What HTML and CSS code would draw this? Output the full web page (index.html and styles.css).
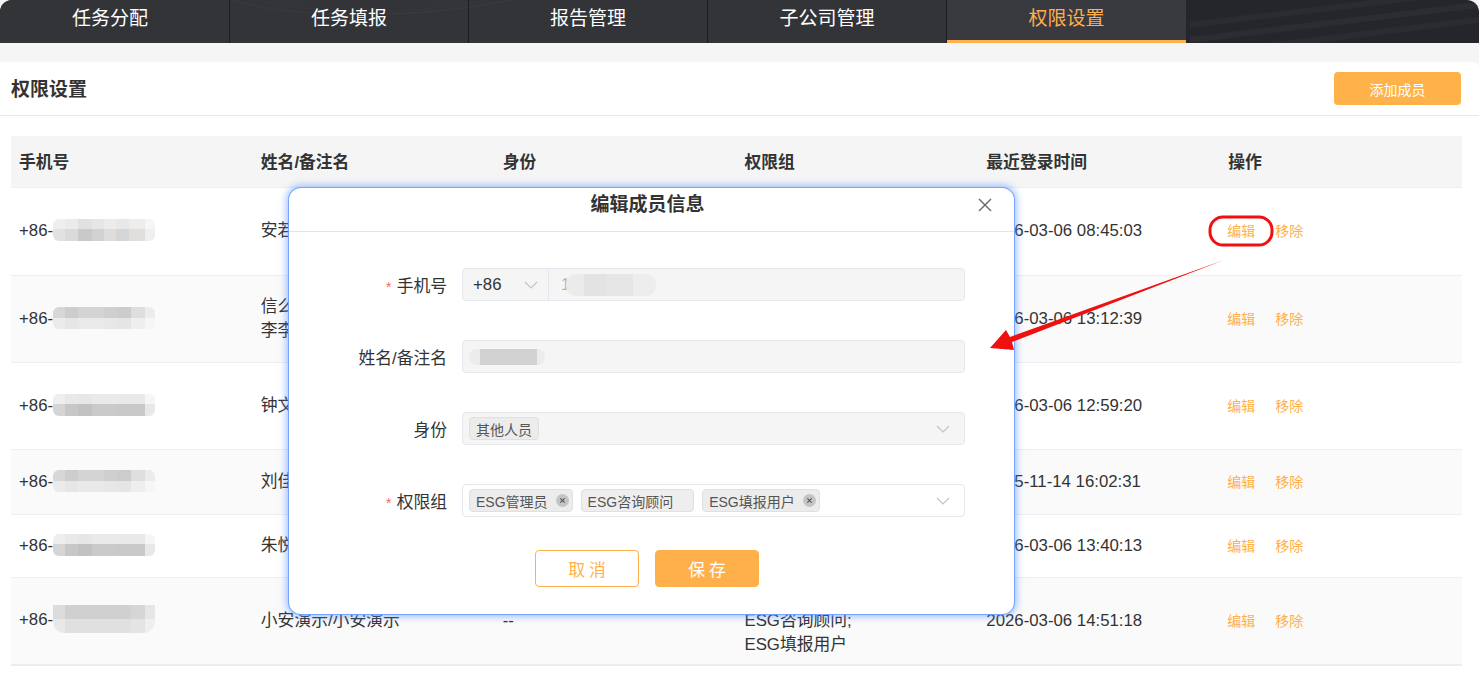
FILE: index.html
```html
<!DOCTYPE html>
<html lang="zh-CN">
<head>
<meta charset="utf-8">
<title>权限设置</title>
<link rel="stylesheet" href="styles.css">
</head>
<body>
<header class="topnav">
  <svg class="nav-deco" width="1479" height="43" viewBox="0 0 1479 43" aria-hidden="true">
    <path d="M225 -2 C 300 22, 430 18, 520 -2" fill="none" stroke="rgba(205,160,120,0.55)" stroke-width="1.2"/>
    <path d="M240 -4 C 320 18, 420 16, 505 -4" fill="none" stroke="rgba(205,160,120,0.3)" stroke-width="1"/>
    <path d="M1190 40 L1479 5" stroke="rgba(255,255,255,0.035)" stroke-width="6"/>
    <path d="M1190 25 L1479 -10" stroke="rgba(255,255,255,0.03)" stroke-width="6"/>
    <path d="M1250 48 L1479 20" stroke="rgba(255,255,255,0.03)" stroke-width="6"/>
  </svg>
  <nav class="tabs">
    <a class="tab">任务分配</a>
    <a class="tab">任务填报</a>
    <a class="tab">报告管理</a>
    <a class="tab">子公司管理</a>
    <a class="tab active">权限设置</a>
  </nav>
</header>

<main class="panel">
  <div class="panel-head">
    <h1 class="panel-title">权限设置</h1>
    <button class="btn-add">添加成员</button>
  </div>

  <table class="members">
    <thead>
      <tr>
        <th>手机号</th>
        <th>姓名/备注名</th>
        <th>身份</th>
        <th>权限组</th>
        <th>最近登录时间</th>
        <th>操作</th>
      </tr>
    </thead>
    <tbody>
      <tr class="tall">
        <td>+86-<span class="mask m1"></span></td>
        <td>安若溪/安若溪</td>
        <td>其他人员</td>
        <td>ESG管理员;<br>ESG咨询顾问;<br>ESG填报用户</td>
        <td>2026-03-06 08:45:03</td>
        <td><a class="act">编辑</a><a class="act">移除</a></td>
      </tr>
      <tr>
        <td>+86-<span class="mask m2"></span></td>
        <td>信么么么/<br>李李李</td>
        <td>其他人员</td>
        <td>ESG管理员;<br>ESG咨询顾问;<br>ESG填报用户</td>
        <td>2026-03-06 13:12:39</td>
        <td><a class="act">编辑</a><a class="act">移除</a></td>
      </tr>
      <tr>
        <td>+86-<span class="mask m3"></span></td>
        <td>钟文/钟文</td>
        <td>其他人员</td>
        <td>ESG管理员;<br>ESG咨询顾问;<br>ESG填报用户</td>
        <td>2026-03-06 12:59:20</td>
        <td><a class="act">编辑</a><a class="act">移除</a></td>
      </tr>
      <tr class="two-a">
        <td>+86-<span class="mask m2"></span></td>
        <td>刘佳/刘佳</td>
        <td>其他人员</td>
        <td>ESG填报用户</td>
        <td>2025-11-14 16:02:31</td>
        <td><a class="act">编辑</a><a class="act">移除</a></td>
      </tr>
      <tr class="two-b">
        <td>+86-<span class="mask m3"></span></td>
        <td>朱悦/朱悦</td>
        <td>其他人员</td>
        <td>ESG填报用户</td>
        <td>2026-03-06 13:40:13</td>
        <td><a class="act">编辑</a><a class="act">移除</a></td>
      </tr>
      <tr>
        <td>+86-<span class="mask m4"></span></td>
        <td>小安演示/小安演示</td>
        <td>--</td>
        <td>ESG管理员;<br>ESG咨询顾问;<br>ESG填报用户</td>
        <td>2026-03-06 14:51:18</td>
        <td><a class="act">编辑</a><a class="act">移除</a></td>
      </tr>
    </tbody>
  </table>
</main>

<div class="modal" role="dialog">
  <div class="modal-head">
    <h2 class="modal-title">编辑成员信息</h2>
    <svg class="modal-close" width="14" height="14" viewBox="0 0 14 14" aria-hidden="true">
      <path d="M1 1 L13 13 M13 1 L1 13" stroke="#666" stroke-width="1.4"/>
    </svg>
  </div>
  <div class="modal-body">
    <div class="form-row">
      <label class="form-label"><span class="req">*</span>手机号</label>
      <div class="field phone disabled">
        <div class="prefix">+86
          <svg class="chev" width="14" height="8" viewBox="0 0 14 8"><polyline points="1,1 7,7 13,1" fill="none" stroke="#c0c4cc" stroke-width="1.2"/></svg>
        </div>
        <div class="phone-num">1<span class="fmask pm"></span></div>
      </div>
    </div>
    <div class="form-row">
      <label class="form-label">姓名/备注名</label>
      <div class="field disabled"><span class="fmask nm"></span></div>
    </div>
    <div class="form-row">
      <label class="form-label">身份</label>
      <div class="field select disabled">
        <span class="tag">其他人员</span>
        <svg class="chev end" width="14" height="8" viewBox="0 0 14 8"><polyline points="1,1 7,7 13,1" fill="none" stroke="#c0c4cc" stroke-width="1.2"/></svg>
      </div>
    </div>
    <div class="form-row">
      <label class="form-label"><span class="req">*</span>权限组</label>
      <div class="field select">
        <span class="tag closable">ESG管理员<svg class="tag-x" width="13" height="13" viewBox="0 0 13 13" aria-hidden="true"><circle cx="6.5" cy="6.5" r="6.5" fill="#c4c4c4"/><path d="M4.3 4.3 L8.7 8.7 M8.7 4.3 L4.3 8.7" stroke="#555" stroke-width="1.1"/></svg></span>
        <span class="tag plain">ESG咨询顾问</span>
        <span class="tag closable">ESG填报用户<svg class="tag-x" width="13" height="13" viewBox="0 0 13 13" aria-hidden="true"><circle cx="6.5" cy="6.5" r="6.5" fill="#c4c4c4"/><path d="M4.3 4.3 L8.7 8.7 M8.7 4.3 L4.3 8.7" stroke="#555" stroke-width="1.1"/></svg></span>
        <svg class="chev end" width="14" height="8" viewBox="0 0 14 8"><polyline points="1,1 7,7 13,1" fill="none" stroke="#c0c4cc" stroke-width="1.2"/></svg>
      </div>
    </div>
    <div class="form-actions">
      <button class="btn btn-ghost">取消</button>
      <button class="btn btn-primary">保存</button>
    </div>
  </div>
</div>

<svg class="annot" width="1479" height="682" viewBox="0 0 1479 682" aria-hidden="true">
  <rect x="1210" y="217" width="62" height="28" rx="13" fill="none" stroke="#f01010" stroke-width="3"/>
  <polygon points="1224,260 1010,337 1006,330 990,348 1014,350 1012,342" fill="#f01010"/>
</svg>
</body>
</html>
```
FILE: styles.css
```css
* { box-sizing: border-box; }

html, body {
  margin: 0;
  padding: 0;
}

body {
  width: 1479px;
  height: 682px;
  overflow: hidden;
  background: #f5f5f5;
  font-family: "Liberation Sans", "Noto Sans CJK SC", sans-serif;
  color: #333;
  position: relative;
}

/* ---------- top navigation ---------- */
.topnav {
  position: relative;
  height: 43px;
  background: #25262b;
  border-radius: 12px 12px 0 0;
  overflow: hidden;
}

.nav-deco {
  position: absolute;
  left: 0;
  top: 0;
  pointer-events: none;
}

.tabs {
  position: relative;
  display: flex;
  margin-left: -9px;
  height: 43px;
}

.tab {
  width: 239px;
  height: 43px;
  display: flex;
  align-items: center;
  justify-content: center;
  padding-bottom: 10px;
  color: #ffffff;
  font-size: 19px;
  background: rgba(52, 53, 58, 0.92);
  border-right: 1px solid #1d1e21;
  cursor: pointer;
}

.tab.active {
  color: #ffb04a;
  background: rgba(58, 59, 64, 0.95);
  border-bottom: 3px solid #ffb04a;
  padding-bottom: 7px;
  border-right: none;
}

/* ---------- panel ---------- */
.panel {
  margin-top: 19px;
  background: #ffffff;
  border-radius: 0 6px 0 0;
  height: 620px;
}

.panel-head {
  height: 54px;
  display: flex;
  align-items: center;
  justify-content: space-between;
  padding: 0 18px 0 11px;
  border-bottom: 1px solid #e8e8e8;
}

.panel-title {
  margin: 0 0 2px;
  font-size: 19px;
  font-weight: bold;
  color: #333;
}

.btn-add {
  width: 127px;
  height: 33px;
  border: none;
  border-radius: 4px;
  background: #ffb24a;
  color: #fff;
  font-size: 14px;
  font-family: inherit;
}

/* ---------- table ---------- */
.members {
  margin: 20px 0 0 11px;
  width: 1451px;
  table-layout: fixed;
  border-collapse: collapse;
  font-size: 16.8px;
}

.members th {
  height: 51px;
  text-align: left;
  padding: 0 8px;
  background: #f5f5f5;
  font-weight: bold;
  color: #333;
  border-bottom: 1px solid #ebeef5;
}

.members td {
  padding: 7px 8px 7px;
  line-height: 24px;
  vertical-align: middle;
  color: #333;
  border-bottom: 1px solid #ebeef5;
  white-space: nowrap;
}

.members tr.tall td {
  padding-bottom: 8px;
}

.members tr.two-a td {
  height: 65px;
}

.members tr.two-b td {
  height: 63px;
}

.members tbody tr:nth-child(even) td {
  background: #fafafa;
}

.members tbody tr:last-child td {
  border-bottom: 2px solid #e9ecf1;
}

.mask {
  display: inline-block;
  width: 102px;
  height: 22px;
  vertical-align: middle;
  margin-top: -3px;
  border-radius: 6px;
  background:
    linear-gradient(to bottom, rgba(255,255,255,0.45) 0 45%, rgba(255,255,255,0) 45% 100%),
    linear-gradient(to right, #e2e1e0 0 12%, #dadada 12% 25%, #c9c9c9 25% 38%, #d2d2d2 38% 50%, #dedddb 50% 62%, #d4d5d7 62% 75%, #e0dfdd 75% 90%, #efefef 90% 100%);
}

.mask.m2 {
  background:
    linear-gradient(to bottom, rgba(255,255,255,0) 0 50%, rgba(255,255,255,0.5) 50% 100%),
    linear-gradient(to right, #d8d7d6 0 12%, #cdcdcd 12% 25%, #d4d4d4 25% 50%, #cfcfcf 50% 63%, #cccccc 63% 76%, #dedede 76% 90%, #ececec 90% 100%);
}

.mask.m3 {
  background:
    linear-gradient(to bottom, rgba(255,255,255,0.6) 0 45%, rgba(255,255,255,0) 45% 100%),
    linear-gradient(to right, #d6d5d4 0 12%, #c7c7c7 12% 25%, #c2c2c4 25% 38%, #cacaca 38% 63%, #c9c9c9 63% 90%, #e8e8e8 90% 100%);
}

.mask.m4 {
  height: 28px;
  border-radius: 0 0 12px 12px;
  background:
    linear-gradient(to bottom, rgba(255,255,255,0) 0 50%, rgba(255,255,255,0.35) 50% 100%),
    linear-gradient(to right, #dcdcdc 0 12%, #d0d0d0 12% 76%, #d6d6d6 76% 90%, #e6e6e6 90% 100%);
}

.act {
  font-size: 14px;
  color: #ffb04a;
  cursor: pointer;
}

.act:first-child {
  margin-left: -1px;
}

.act + .act {
  margin-left: 20px;
}

/* ---------- modal ---------- */
.modal {
  position: absolute;
  left: 289px;
  top: 188px;
  width: 725px;
  height: 426px;
  background: #ffffff;
  border-radius: 12px;
  box-shadow: 0 0 0 1px rgba(110, 160, 255, 0.9), 0 0 7px 3px rgba(80, 140, 255, 0.5);
  z-index: 5;
}

.modal-head {
  position: relative;
  height: 44px;
  border-bottom: 1px solid #e4e4e4;
  text-align: center;
  padding: 5px 8px 0 0;
}

.modal-title {
  margin: 0;
  font-size: 19px;
  line-height: 24px;
  font-weight: bold;
  color: #333;
}

.modal-close {
  position: absolute;
  right: 22px;
  top: 10px;
}

.modal-body {
  padding: 36px 49px 0 0;
}

.form-row {
  display: flex;
  align-items: center;
  height: 33px;
  margin-bottom: 39px;
}

.form-label {
  width: 173px;
  padding-right: 15px;
  text-align: right;
  font-size: 16.8px;
  color: #333;
  flex-shrink: 0;
}

.req {
  color: #f56c6c;
  margin-right: 5px;
  font-size: 15px;
}

.field {
  position: relative;
  flex: 1;
  height: 33px;
  border: 1px solid #e4e7ed;
  border-radius: 4px;
  background: #ffffff;
  display: flex;
  align-items: center;
  padding-left: 6px;
}

.field.disabled {
  background: #f5f5f5;
}

.field.phone {
  padding-left: 0;
}

.prefix {
  width: 86px;
  height: 100%;
  display: flex;
  align-items: center;
  padding-left: 10px;
  border-right: 1px solid #e4e7ed;
  font-size: 16.8px;
  color: #333;
  position: relative;
}

.prefix .chev {
  position: absolute;
  right: 10px;
  top: 12px;
}

.phone-num {
  display: flex;
  align-items: center;
  padding-left: 12px;
  font-size: 16px;
  color: #b5b5b5;
}

.fmask {
  display: inline-block;
  border-radius: 10px;
}

.fmask.pm {
  width: 90px;
  height: 22px;
  margin-left: -4px;
  background: linear-gradient(to right, #ebebeb 0 20%, #e3e3e3 20% 45%, #e6e6e6 45% 75%, #ededed 75% 100%);
}

.fmask.nm {
  width: 76px;
  height: 16px;
  margin-left: 0;
  background: linear-gradient(to right, #ececec 0 14%, #d2d2d2 14% 90%, #ececec 90% 100%);
}

.chev.end {
  position: absolute;
  right: 14px;
  top: 12px;
}

.tag {
  display: inline-flex;
  align-items: center;
  height: 23px;
  padding: 0 6px;
  margin-right: 8px;
  background: #ececec;
  border: 1px solid #e0e0e0;
  border-radius: 4px;
  font-size: 14px;
  color: #555;
  white-space: nowrap;
}

.tag.closable {
  padding-right: 3px;
}

.tag.plain {
  padding-right: 20px;
  background: #eeeeee;
}

.tag-x {
  display: block;
  margin-left: 8px;
  flex-shrink: 0;
}

.form-actions {
  display: flex;
  gap: 16px;
  padding-left: 246px;
  margin-top: -6px;
}

.btn {
  width: 104px;
  height: 37px;
  border-radius: 4px;
  font-family: inherit;
  font-size: 16.8px;
  letter-spacing: 4px;
  text-indent: 4px;
}

.btn-ghost {
  background: #ffffff;
  border: 1px solid #ffb04a;
  color: #ffb04a;
}

.btn-primary {
  background: #ffb04a;
  border: 1px solid #ffb04a;
  color: #ffffff;
}

/* ---------- annotation overlay ---------- */
.annot {
  position: absolute;
  left: 0;
  top: 0;
  pointer-events: none;
  z-index: 10;
}
```
